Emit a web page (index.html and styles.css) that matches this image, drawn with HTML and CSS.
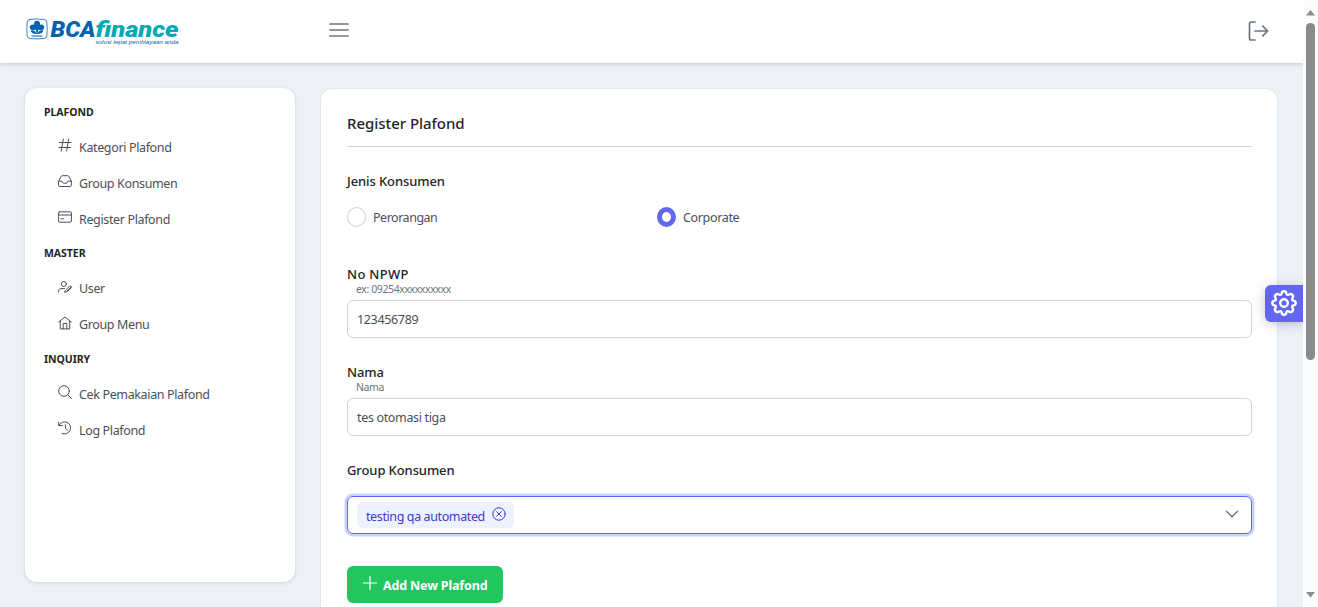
FILE: index.html
```html
<!DOCTYPE html>
<html lang="id">
<head>
<meta charset="utf-8">
<title>Register Plafond</title>
<link rel="stylesheet" href="styles.css">
</head>
<body>
<div class="app">
  <div class="view">
    <header class="topbar">
      <svg class="logo" width="156" height="32" viewBox="25 15 156 32" role="img">
        <path class="logo-line" d="M30 19.400Q37 18.600 44 19.400Q46.500 19.800 46.800 22Q47.600 29 46.800 36Q46.500 38.300 44 38.500Q37 39.300 30 38.500Q27.500 38.200 27.200 36Q26.400 29 27.200 22Q27.400 19.800 30 19.400Z"/>
        <g class="logo-blue">
          <ellipse cx="37" cy="24" rx="3" ry="3.300"/>
          <ellipse cx="33" cy="27.500" rx="3.300" ry="2.900" transform="rotate(25 33 27.500)"/>
          <ellipse cx="41" cy="27.500" rx="3.300" ry="2.900" transform="rotate(-25 41 27.500)"/>
          <path d="M36 26h2v6h-2zM30.500 30.500Q34 30 36.800 32.800Q40 30 43.500 30.500Q42.500 34 37 34Q31.500 34 30.500 30.500Z"/>
          <rect x="31.500" y="35.500" width="11" height="1"/>
          <text class="logo-word" x="50.500" y="37.300" textLength="45" lengthAdjust="spacingAndGlyphs">BCA</text>
          <text class="logo-tag" x="95.500" y="44.300" textLength="83" lengthAdjust="spacingAndGlyphs">solusi tepat pembiayaan anda</text>
        </g>
        <text class="logo-word logo-teal" x="95.500" y="37.300" textLength="83" lengthAdjust="spacingAndGlyphs">finance</text>
      </svg>
      <svg class="burger" width="20" height="14" viewBox="0 0 20 14"><path d="M1 1h18M1 7h18M1 13h18"/></svg>
      <svg class="signout" width="22" height="20" viewBox="0 0 22 20"><path d="M8 1H4.200Q2.500 1 2.500 2.700V17.300Q2.500 19 4.200 19H8M8 10H20.500M15.800 5.200L20.700 10L15.800 14.800"/></svg>
    </header>
    <div class="content">
      <nav class="sidebar">
        <h6 class="group">PLAFOND</h6>
        <a class="item"><svg class="ic" viewBox="0 0 14 14"><path d="M5.300 1L3.300 13M10.700 1L8.700 13M1.500 4.500H13M1 9.500H12.500"/></svg><span>Kategori Plafond</span></a>
        <a class="item"><svg class="ic" viewBox="0 0 14 14"><path d="M.600 7.500L3.200 2.300Q3.500 1.700 4.200 1.700H9.800Q10.500 1.700 10.800 2.300L13.400 7.500V11.500Q13.400 12.500 12.400 12.500H1.600Q.600 12.500 .600 11.500ZM.600 7.200H4L5.300 9.200H8.700L10 7.200H13.400"/></svg><span>Group Konsumen</span></a>
        <a class="item"><svg class="ic" viewBox="0 0 14 14"><path d="M1.600 1.800H12.400Q13.400 1.800 13.400 2.800V11.200Q13.400 12.200 12.400 12.200H1.600Q.600 12.200 .600 11.200V2.800Q.600 1.800 1.600 1.800ZM.600 5H13.400M3 8.800H5.500"/></svg><span>Register Plafond</span></a>
        <h6 class="group">MASTER</h6>
        <a class="item"><svg class="ic" viewBox="0 0 14 14"><circle cx="5.900" cy="4" r="2.500"/><path d="M.600 12V10.800Q.800 8.700 3 8.600H6.500M7.500 10.200L11.500 6.200Q12.500 5.500 13.200 6.300Q13.800 7 13.100 7.800L9.200 11.700L7 12.200ZM9 11L12.800 7.200"/></svg><span>User</span></a>
        <a class="item"><svg class="ic" viewBox="0 0 14 14"><path d="M.600 6.200L7 .900L13.400 6.200M2.300 5V12.900H11.700V5M5.200 12.900V7.500H8.800V12.900"/></svg><span>Group Menu</span></a>
        <h6 class="group">INQUIRY</h6>
        <a class="item"><svg class="ic" viewBox="0 0 14 14"><circle cx="6" cy="6" r="5.300"/><path d="M9.800 9.800L13.600 13.600"/></svg><span>Cek Pemakaian Plafond</span></a>
        <a class="item"><svg class="ic" viewBox="0 0 14 14"><path d="M.700 1V4.500H4.300M1 4.300A6.100 6.100 0 1 1 4 12.500M7.400 3.800V7.200L9.600 9.400"/></svg><span>Log Plafond</span></a>
      </nav>
      <main class="card">
        <h5 class="title"><span>Register Plafond</span></h5>
        <div class="label l-jenis">Jenis Konsumen</div>
        <div class="radios">
          <label class="radio"><i class="dot"></i><span class="tight">Perorangan</span></label>
          <label class="radio"><i class="dot on"></i><span>Corporate</span></label>
        </div>
        <div class="label l-npwp">No NPWP</div>
        <small class="hint">ex: 09254xxxxxxxxxx</small>
        <div class="input"><span>123456789</span></div>
        <div class="label l-nama">Nama</div>
        <small class="hint">Nama</small>
        <div class="input"><span>tes otomasi tiga</span></div>
        <div class="label l-group">Group Konsumen</div>
        <div class="input select">
          <span class="chip"><span class="chip-text">testing qa automated</span><svg width="14" height="14" viewBox="0 0 14 14"><circle cx="7" cy="7" r="6.200"/><path d="M4.700 4.700L9.300 9.300M9.300 4.700L4.700 9.300"/></svg></span>
          <svg class="chev" width="14" height="8" viewBox="0 0 14 8"><path d="M1.500 1.200L7 6.700L12.500 1.200"/></svg>
        </div>
        <button class="add"><svg width="14" height="14" viewBox="0 0 14 14"><path d="M7 .500V13.500M.500 7H13.500"/></svg><span>Add New Plafond</span></button>
      </main>
    </div>
    <button class="config"><svg width="26" height="26" viewBox="0 0 26 26"><path d="M10.600 3.500Q11 1.300 13 1.300Q15 1.300 15.400 3.500Q15.900 5.600 17.900 4.500Q19.800 3.200 21.300 4.700Q22.800 6.200 21.500 8.100Q20.400 10.100 22.500 10.600Q24.700 11 24.700 13Q24.700 15 22.500 15.400Q20.400 15.900 21.500 17.900Q22.800 19.800 21.300 21.300Q19.800 22.800 17.900 21.500Q15.900 20.400 15.400 22.500Q15 24.700 13 24.700Q11 24.700 10.600 22.500Q10.100 20.400 8.100 21.500Q6.200 22.800 4.700 21.300Q3.200 19.800 4.500 17.900Q5.600 15.900 3.500 15.400Q1.300 15 1.300 13Q1.300 11 3.500 10.600Q5.600 10.100 4.500 8.100Q3.200 6.200 4.700 4.700Q6.200 3.200 8.100 4.500Q10.100 5.600 10.600 3.500Z"/><circle cx="13" cy="13" r="3.800"/></svg></button>
  </div>
  <div class="scroll">
    <svg width="9" height="6" viewBox="0 0 9 6"><path d="M4.500 0L9 5.500H0Z"/></svg>
    <div class="thumb"></div>
    <svg class="down" width="9" height="6" viewBox="0 0 9 6"><path d="M0 0H9L4.500 5.500Z"/></svg>
  </div>
</div>
</body>
</html>
```
FILE: styles.css
```css
* { box-sizing: border-box; }
body { margin: 0; font-family: "Noto Sans", "Open Sans", sans-serif; font-size: 12.500px; letter-spacing: -.34px; color: #495057; }
svg { display: block; flex: none; fill: none; stroke: currentColor; stroke-linecap: round; stroke-linejoin: round; }
h5, h6 { margin: 0; }
.app { display: flex; height: 607px; overflow: hidden; }
.view { position: relative; width: 1303px; height: 607px; overflow: hidden; background: #edf1f6; }

.topbar { position: relative; display: flex; align-items: center; height: 63px; padding: 0 34px 2px 25px; background: #fff; box-shadow: 0 1px 4px rgba(0, 0, 0, .18); color: #6c757d; }
.logo { stroke: none; letter-spacing: 0; }
.logo-line { fill: none; stroke: #0b66b2; stroke-width: .8; }
.logo-blue { fill: #0463b0; }
.logo-teal { fill: #00a9b8; }
.logo-word { font: italic 900 22px Roboto, sans-serif; }
.logo-tag { font: italic 400 6px "Liberation Sans", sans-serif; }
.burger { margin: -1px 0 0 148px; stroke-width: 1.7; }
.signout { margin-left: auto; stroke-width: 1.7; }

.content { display: flex; align-items: flex-start; gap: 25px; padding: 25px 25px 0; }
.sidebar { width: 270px; height: 494px; padding: 7px 19px; border-radius: 12px; background: #fff; box-shadow: 0 1px 4px rgba(0, 0, 0, .12); }
.group { display: flex; align-items: center; height: 33.500px; font-size: 10.500px; font-weight: 700; letter-spacing: -.05px; color: #212529; white-space: nowrap; }
.item { display: flex; align-items: center; gap: 7px; height: 36px; padding-left: 14px; letter-spacing: -.36px; white-space: nowrap; }
.item span { padding-top: 1.500px; }
.ic { width: 14px; height: 14px; margin-top: -3px; }

.card { width: 958px; height: 620px; padding: 0 25px 0 26px; border: 1px solid #dfe7ef; border-radius: 12px; background: #fff; white-space: nowrap; }
.title { display: flex; align-items: center; height: 58px; padding-top: 10px; border-bottom: 1px solid #ced4da; font-size: 15px; font-weight: 500; letter-spacing: -.05px; color: #212529; }
.label { line-height: 20px; font-size: 13px; font-weight: 500; letter-spacing: -.1px; color: #212529; }
.l-jenis { margin-top: 24px; }
.radios { display: grid; grid-template-columns: 310px 310px; height: 20px; margin-top: 16px; }
.radio { display: flex; align-items: center; gap: 7px; }
.tight { letter-spacing: -.48px; }
.dot { width: 19px; height: 20px; border: 1px solid #ced4da; border-radius: 50%; }
.dot.on { border: 5px solid #6366f1; }
.l-npwp { margin-top: 37px; letter-spacing: .3px; }
.hint { display: block; height: 16px; margin-top: -3px; padding-left: 9px; line-height: 16px; font-size: 10.500px; letter-spacing: -.4px; color: #6c757d; }
.input { display: flex; align-items: center; height: 38px; margin-top: 3px; padding: 0 9px; border: 1px solid #ced4da; border-radius: 6px; }
.l-nama, .l-group { margin-top: 24px; }
.select { margin-top: 16px; border-color: #6366f1; box-shadow: 0 0 0 2.500px #c7d2fe; }
.chip { display: flex; align-items: center; gap: 6px; width: 157px; height: 26px; padding-left: 9px; border-radius: 6px; background: #eef2ff; color: #4338ca; }
.chip svg { margin-top: -3px; }
.chip-text { width: 120px; padding-top: 2px; letter-spacing: -.39px; }
.chev { margin: -2px 3px 0 auto; stroke-width: 1.4; color: #6c757d; }
.add { display: flex; align-items: center; gap: 6px; width: 156px; height: 37px; margin-top: 32px; padding: 0 0 0 16px; border: 0; border-radius: 6px; background: #22c55e; color: #fff; font: 700 12.500px "Noto Sans", sans-serif; letter-spacing: -.15px; white-space: nowrap; }
.add span { padding-top: 1px; }
.add svg { margin-top: -4px; stroke-width: 1.2; }
.config { position: absolute; right: 0; top: 285px; display: grid; place-items: center; width: 38px; height: 37px; padding: 0 0 1px; border: 0; border-radius: 6px 0 0 6px; background: #6366f1; color: #fff; box-shadow: 0 2px 12px rgba(0, 0, 0, .22); }
.config svg { stroke-width: 2.4; }

.scroll { display: flex; flex-direction: column; align-items: center; width: 15px; height: 607px; padding: 10px 0 9px; background: #fcfcfc; }
.scroll svg { fill: #8b8b8b; stroke: none; }
.thumb { width: 9px; height: 337px; margin-top: 7px; border-radius: 5px; background: #8b8b8b; }
.down { margin-top: auto; }
```
